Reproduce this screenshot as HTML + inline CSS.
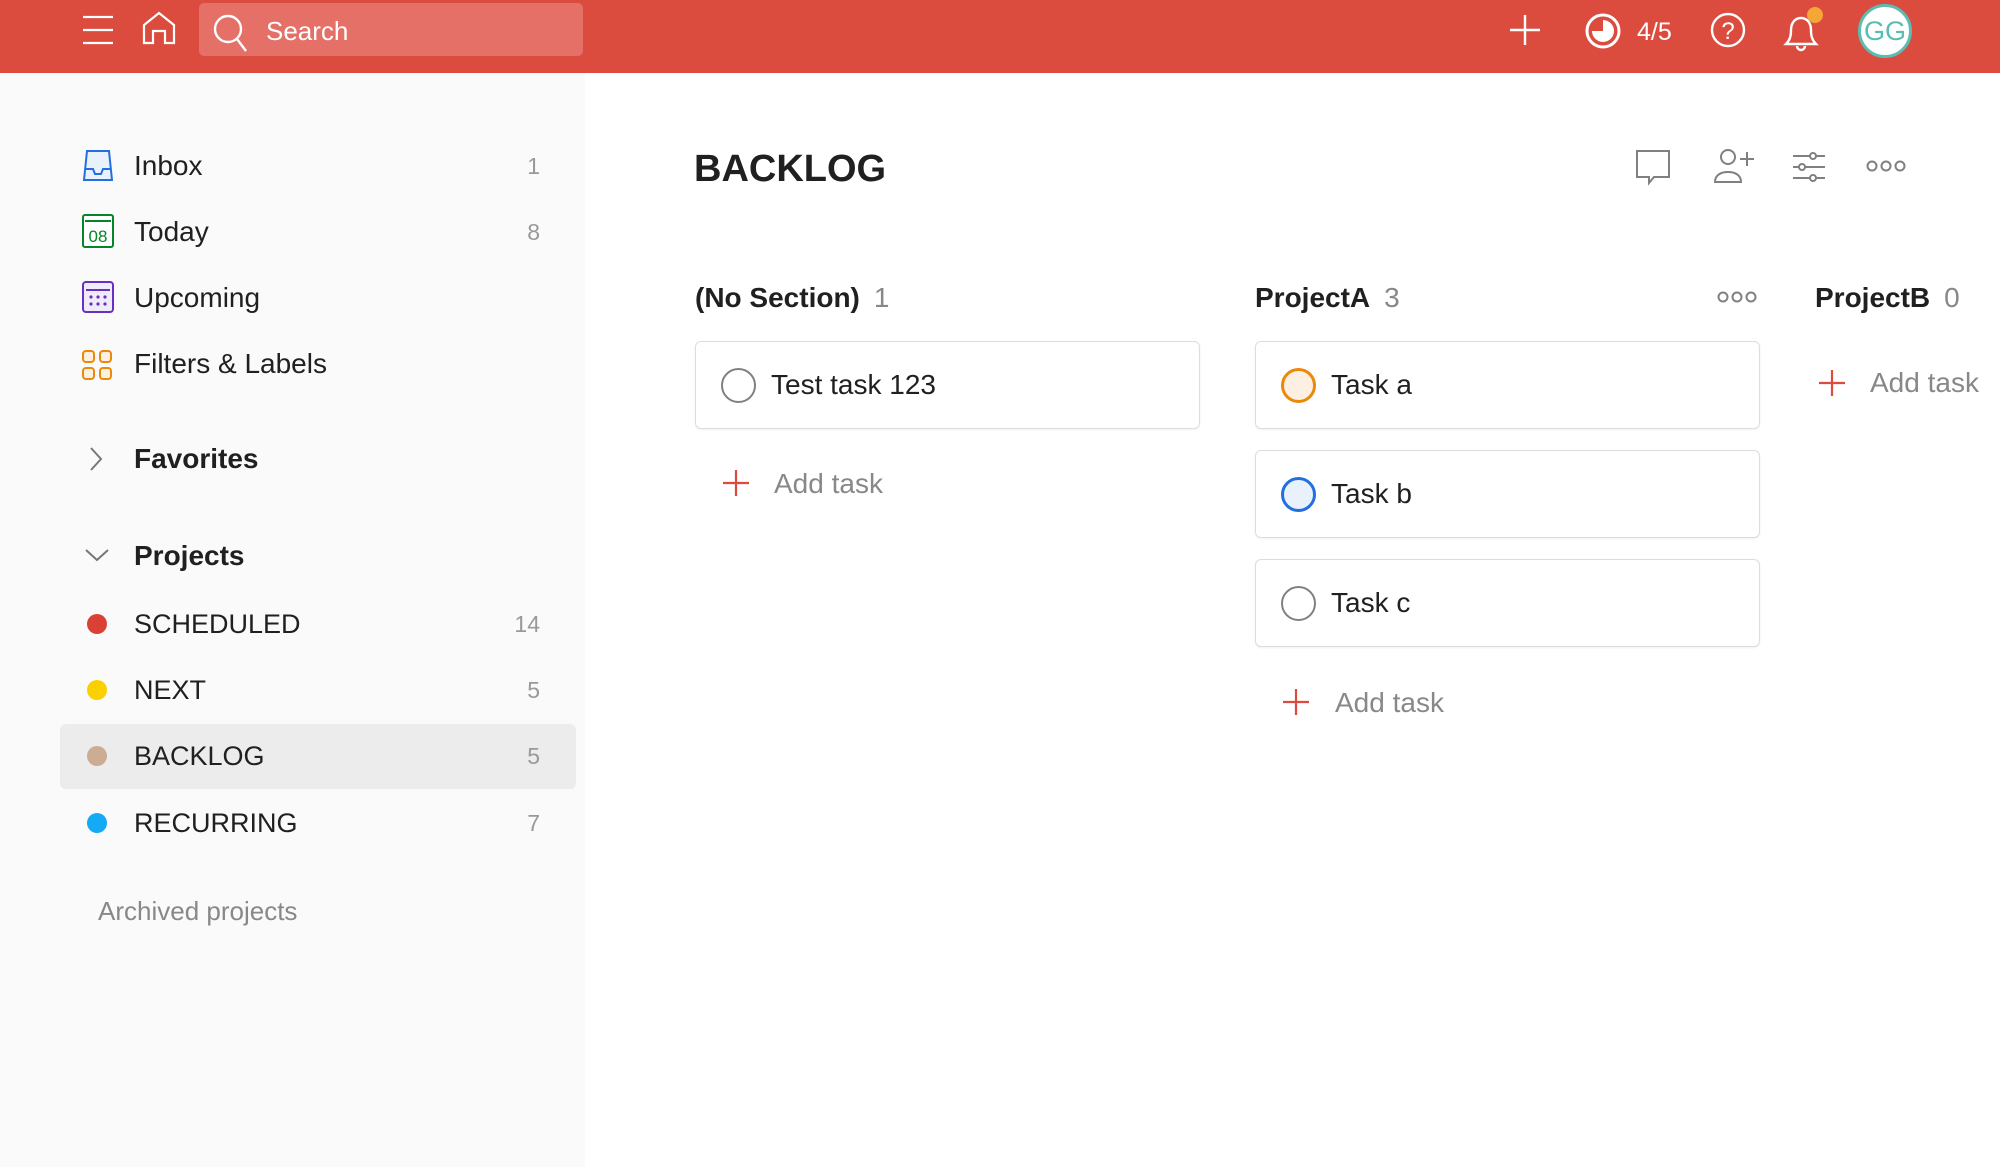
<!DOCTYPE html>
<html><head><meta charset="utf-8"><style>
*{margin:0;padding:0;box-sizing:border-box}
body{width:2000px;height:1167px;overflow:hidden;background:#fff;font-family:"Liberation Sans",sans-serif;color:#202020;position:relative}
.a{position:absolute}
.t{position:absolute;height:40px;line-height:40px;white-space:nowrap}
.side{left:0;top:73px;width:585px;height:1094px;background:#fafafa}
.hdr{left:0;top:0;width:2000px;height:73px;background:#db4c3f}
.item{font-size:28px;color:#202020}
.cnt{font-size:23px;color:#999;text-align:right;width:60px;left:480px}
.card{position:absolute;width:505px;height:88px;border:1px solid #ddd;border-radius:6px;background:#fff;box-shadow:0 1px 2px rgba(0,0,0,.06)}
.card .c{position:absolute;left:25px;top:26px;width:35px;height:35px;border-radius:50%;border:2px solid #808080}
.card span{position:absolute;left:75px;top:23px;font-size:28px;line-height:40px}
.dot{position:absolute;width:20px;height:20px;border-radius:50%}
.sec{font-size:28px;font-weight:bold}
.sec i{font-style:normal;font-weight:normal;color:#888;margin-left:14px}
.add{font-size:28px;color:#888}
</style></head><body>
<div class="a hdr"></div>
<svg class="a" style="left:80px;top:14px" width="36" height="32" viewBox="0 0 36 32" stroke="#fff" stroke-width="2.2"><path d="M3 3h30M3 16h30M3 29h30"/></svg>
<svg class="a" style="left:140px;top:10px" width="38" height="38" viewBox="0 0 38 38" fill="none" stroke="#fff" stroke-width="2.2"><path d="M4 33V15L19 3l15 12v18h-9V21h-12v12z"/></svg>
<div class="a" style="left:199px;top:3px;width:384px;height:53px;background:#e47067;border-radius:5px"></div>
<svg class="a" style="left:212px;top:13px" width="40" height="40" viewBox="0 0 40 40" fill="none" stroke="#fff" stroke-width="2.4"><circle cx="16" cy="16" r="13"/><path d="M25 26l9 12"/></svg>
<div class="t" style="left:266px;top:11px;font-size:26px;color:#fff">Search</div>
<svg class="a" style="left:1508px;top:13px" width="34" height="34" stroke="#fff" stroke-width="2.4"><path d="M17 2v30M2 17h30"/></svg>
<svg class="a" style="left:1584px;top:12px" width="38" height="38" viewBox="0 0 38 38"><circle cx="19" cy="19" r="16" fill="none" stroke="#fff" stroke-width="3"/><path d="M19 8a11 11 0 1 1-11 11h11z" fill="#fff"/></svg>
<div class="t" style="left:1637px;top:12px;font-size:25px;color:#fff">4/5</div>
<svg class="a" style="left:1710px;top:12px" width="36" height="36" viewBox="0 0 36 36"><circle cx="18" cy="18" r="16" fill="none" stroke="#fff" stroke-width="2.4"/><text x="18" y="27" font-size="24" text-anchor="middle" fill="#fff" font-family="Liberation Sans">?</text></svg>
<svg class="a" style="left:1781px;top:8px" width="40" height="44" viewBox="0 0 40 44" fill="none" stroke="#fff" stroke-width="2.4"><path d="M5 36h30c-4-4-5-8-5-14 0-7-4-12-10-12S10 15 10 22c0 6-1 10-5 14zM16 38a4 4 0 0 0 8 0"/></svg>
<div class="dot" style="left:1807px;top:7px;width:16px;height:16px;background:#f4a637"></div>
<div class="a" style="left:1858px;top:4px;width:54px;height:54px;border-radius:50%;background:#fff;border:3px solid #5bbdb2;color:#5bbdb2;font-size:27px;text-align:center;line-height:48px">GG</div>

<div class="a side"></div>
<svg class="a" style="left:82px;top:149px" width="32" height="34" viewBox="0 0 32 34" fill="none" stroke="#246fe0" stroke-width="2"><path d="M5 2h22l3 29H2z" fill="#e9f1fd"/><path d="M3 20h8l2 5h6l2-5h8"/></svg>
<svg class="a" style="left:82px;top:214px" width="32" height="34" viewBox="0 0 32 34"><rect x="1" y="1" width="30" height="32" rx="2" fill="#fff" stroke="#058527" stroke-width="2"/><path d="M3 7h26" stroke="#058527" stroke-width="2"/><text x="16" y="28" font-size="17" text-anchor="middle" fill="#058527" font-family="Liberation Sans">08</text></svg>
<svg class="a" style="left:82px;top:281px" width="32" height="32" viewBox="0 0 32 32"><rect x="1" y="1" width="30" height="30" rx="3" fill="#f0ebfa" stroke="#692fc2" stroke-width="2"/><path d="M4 9h24" stroke="#692fc2" stroke-width="2"/><g fill="#692fc2"><circle cx="9" cy="16" r="1.6"/><circle cx="16" cy="16" r="1.6"/><circle cx="23" cy="16" r="1.6"/><circle cx="9" cy="23" r="1.6"/><circle cx="16" cy="23" r="1.6"/><circle cx="23" cy="23" r="1.6"/></g></svg>
<svg class="a" style="left:82px;top:350px" width="30" height="30" viewBox="0 0 30 30" fill="#fdf0e3" stroke="#eb8909" stroke-width="2"><rect x="1" y="1" width="11" height="11" rx="3"/><rect x="18" y="1" width="11" height="11" rx="3"/><rect x="1" y="18" width="11" height="11" rx="3"/><rect x="18" y="18" width="11" height="11" rx="3"/></svg>
<div class="t item" style="left:134px;top:146px">Inbox</div><div class="t cnt" style="top:146px">1</div>
<div class="t item" style="left:134px;top:212px">Today</div><div class="t cnt" style="top:212px">8</div>
<div class="t item" style="left:134px;top:278px">Upcoming</div>
<div class="t item" style="left:134px;top:344px">Filters &amp; Labels</div>
<svg class="a" style="left:88px;top:446px" width="16" height="26" fill="none" stroke="#777" stroke-width="2"><path d="M3 2l10 11L3 24"/></svg>
<div class="t item" style="left:134px;top:439px;font-weight:bold">Favorites</div>
<svg class="a" style="left:84px;top:547px" width="26" height="16" fill="none" stroke="#777" stroke-width="2"><path d="M2 3l11 10L24 3"/></svg>
<div class="t item" style="left:134px;top:536px;font-weight:bold">Projects</div>
<div class="a" style="left:60px;top:724px;width:516px;height:65px;background:#ececec;border-radius:6px"></div>
<div class="dot" style="left:87px;top:614px;background:#db4035"></div><div class="t item" style="left:134px;top:604px;font-size:27px">SCHEDULED</div><div class="t cnt" style="top:604px">14</div>
<div class="dot" style="left:87px;top:680px;background:#fad000"></div><div class="t item" style="left:134px;top:670px;font-size:27px">NEXT</div><div class="t cnt" style="top:670px">5</div>
<div class="dot" style="left:87px;top:746px;background:#ccac93"></div><div class="t item" style="left:134px;top:736px;font-size:27px">BACKLOG</div><div class="t cnt" style="top:736px">5</div>
<div class="dot" style="left:87px;top:813px;background:#14aaf5"></div><div class="t item" style="left:134px;top:803px;font-size:27px">RECURRING</div><div class="t cnt" style="top:803px">7</div>
<div class="t" style="left:98px;top:891px;font-size:26px;color:#888">Archived projects</div>

<div class="t" style="left:694px;top:149px;font-size:38px;font-weight:bold">BACKLOG</div>
<svg class="a" style="left:1634px;top:148px" width="38" height="40" viewBox="0 0 38 40" fill="none" stroke="#808080" stroke-width="2"><path d="M3 3h32v26H20l-5 6v-6H3z"/></svg>
<svg class="a" style="left:1711px;top:146px" width="44" height="40" viewBox="0 0 44 40" fill="none" stroke="#808080" stroke-width="2"><circle cx="17" cy="11" r="7"/><path d="M4 36c0-7 6-10 13-10s13 3 13 10z"/><path d="M36 6v14M29 13h14"/></svg>
<svg class="a" style="left:1791px;top:150px" width="36" height="34" viewBox="0 0 36 34" fill="none" stroke="#808080" stroke-width="2"><path d="M2 6h32M2 17h32M2 28h32"/><circle cx="22" cy="6" r="3" fill="#fff"/><circle cx="11" cy="17" r="3" fill="#fff"/><circle cx="22" cy="28" r="3" fill="#fff"/></svg>
<svg class="a" style="left:1866px;top:159px" width="40" height="14" viewBox="0 0 40 14" fill="none" stroke="#808080" stroke-width="2"><circle cx="6" cy="7" r="4.5"/><circle cx="20" cy="7" r="4.5"/><circle cx="34" cy="7" r="4.5"/></svg>

<div class="t sec" style="left:695px;top:278px">(No Section)<i>1</i></div>
<div class="t sec" style="left:1255px;top:278px">ProjectA<i>3</i></div>
<div class="t sec" style="left:1815px;top:278px">ProjectB<i>0</i></div>
<svg class="a" style="left:1717px;top:290px" width="40" height="14" viewBox="0 0 40 14" fill="none" stroke="#808080" stroke-width="2"><circle cx="6" cy="7" r="4.5"/><circle cx="20" cy="7" r="4.5"/><circle cx="34" cy="7" r="4.5"/></svg>

<div class="card" style="left:695px;top:341px"><div class="c"></div><span>Test task 123</span></div>
<div class="card" style="left:1255px;top:341px"><div class="c" style="border:3px solid #eb8909;background:#fdf0e3"></div><span>Task a</span></div>
<div class="card" style="left:1255px;top:450px"><div class="c" style="border:3px solid #246fe0;background:#e9f1fd"></div><span>Task b</span></div>
<div class="card" style="left:1255px;top:559px"><div class="c"></div><span>Task c</span></div>

<svg class="a" style="left:722px;top:469px" width="28" height="28" stroke="#db4c3f" stroke-width="2.2"><path d="M14 1v26M1 14h26"/></svg>
<div class="t add" style="left:774px;top:464px">Add task</div>
<svg class="a" style="left:1282px;top:688px" width="28" height="28" stroke="#db4c3f" stroke-width="2.2"><path d="M14 1v26M1 14h26"/></svg>
<div class="t add" style="left:1335px;top:683px">Add task</div>
<svg class="a" style="left:1818px;top:369px" width="28" height="28" stroke="#db4c3f" stroke-width="2.2"><path d="M14 1v26M1 14h26"/></svg>
<div class="t add" style="left:1870px;top:363px">Add task</div>
</body></html>
